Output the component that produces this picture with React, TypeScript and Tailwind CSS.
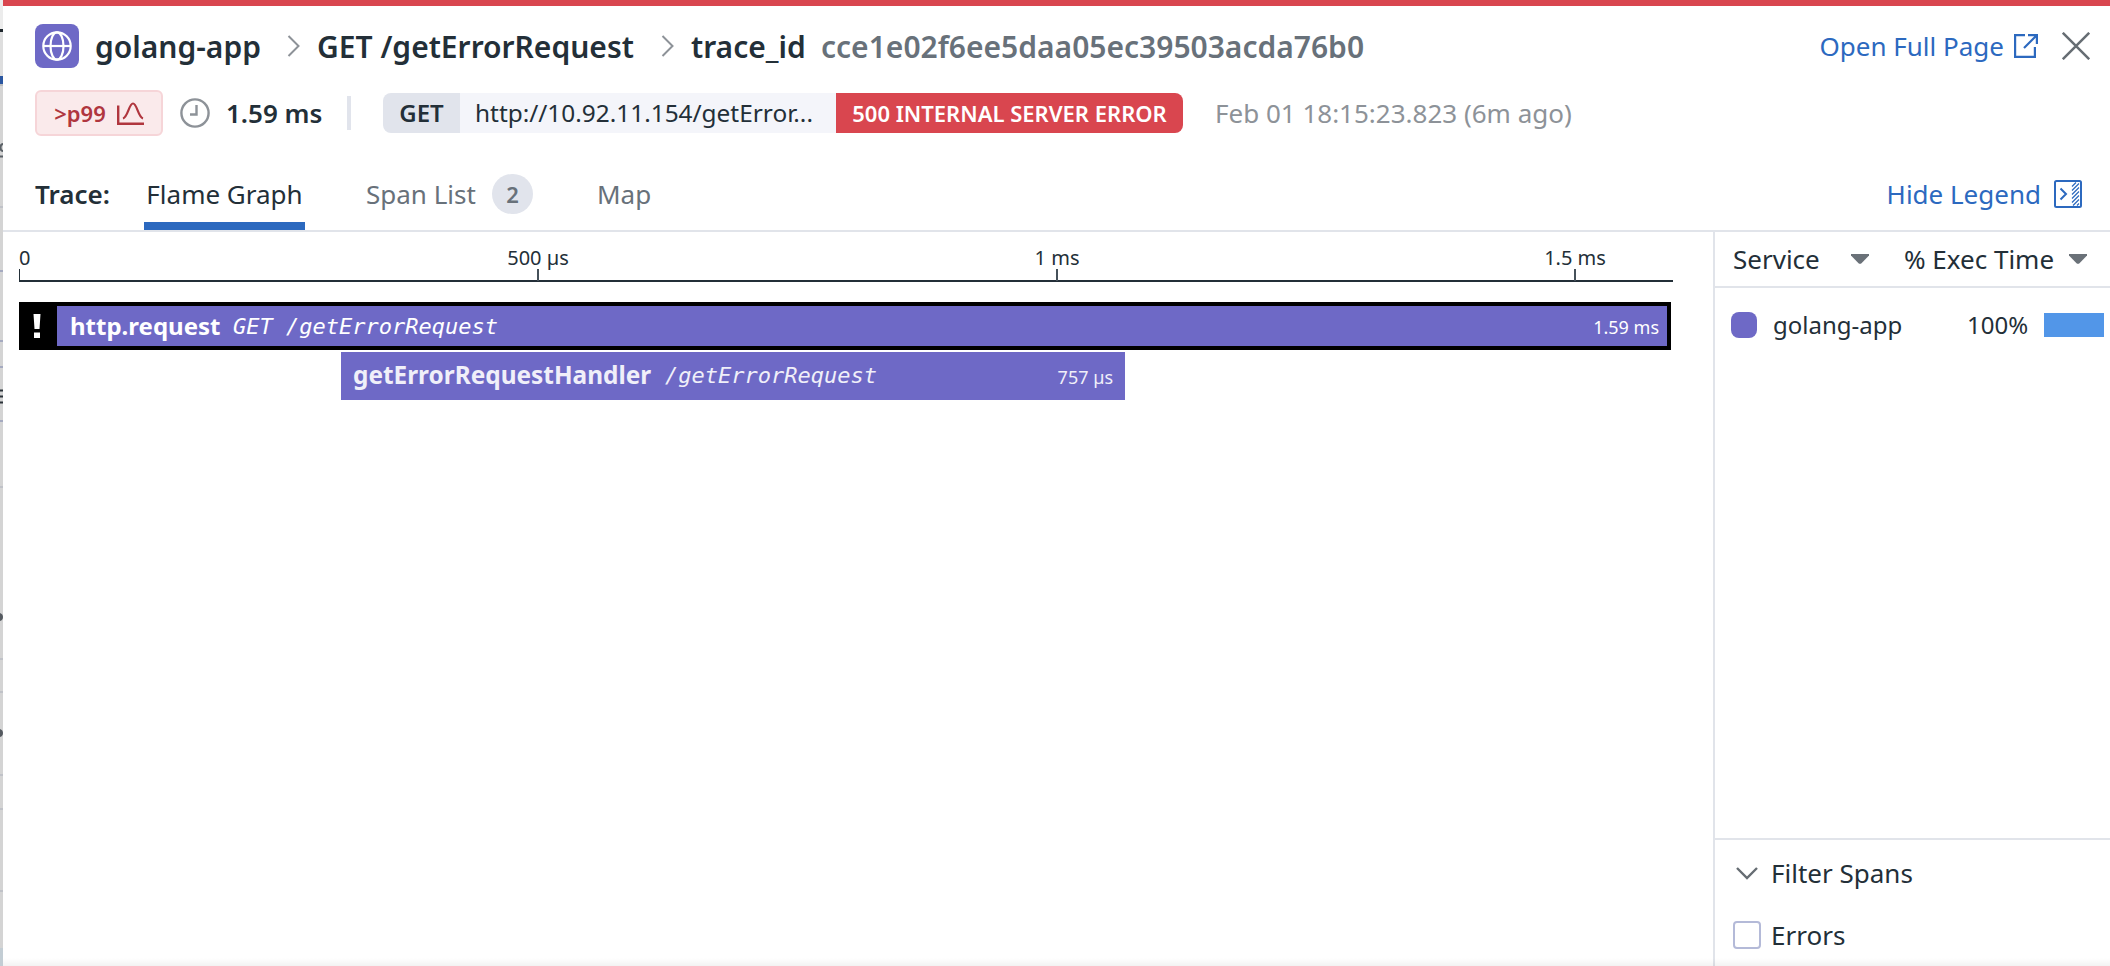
import React from "react";

const axis = [
  { label: "500 µs", left: 518 },
  { label: "1 ms", left: 1037 },
  { label: "1.5 ms", left: 1555 },
];

const edgeLines = [207, 271, 341, 367, 421, 487, 659, 692, 775, 809, 891];

function PageEdge() {
  return (
    <svg className="w-[3px] shrink-0" width="3" height="966" viewBox="0 0 3 966">
      <rect width="3" height="966" fill="#d4d4d4" />
      <rect width="3" height="29" fill="#ececec" />
      <rect y="32" width="3" height="44" fill="#dedede" />
      <rect y="29" width="3" height="3" fill="#1d252b" />
      <rect y="76" width="3" height="8" fill="#2a56a0" />
      <rect y="84" width="3" height="2" fill="#bcbdbf" />
      {edgeLines.map((y) => (
        <rect key={y} y={y - 1} width="3" height="2" fill={y > 250 && y < 430 ? "#a5aac0" : "#c0c2c8"} />
      ))}
      <rect y="948" width="3" height="18" fill="#c3cdd4" />
      <path d="M3 144Q.5 144 .5 147.500T3 151M0 156.500H3" stroke="#5a6066" strokeWidth="2" fill="none" />
      <path d="M0 390.500H3M0 396.500H3M0 402.500H3" stroke="#2a3238" strokeWidth="2" />
      <path d="M0 613q3 1 3 4t-3 4zM0 729q3 1 3 4t-3 4z" fill="#555a60" />
    </svg>
  );
}

function Chevron({ className }: { className?: string }) {
  return (
    <svg className={className} width="14" height="24" viewBox="0 0 14 24" fill="none" stroke="#8d9298" strokeWidth="2">
      <path d="M1.5 2 11.5 12 1.5 22" />
    </svg>
  );
}

function Caret() {
  return (
    <svg width="18" height="10" viewBox="0 0 18 10" fill="#6a7178">
      <path d="M0 0h18v1.500L10.500 9.200q-1.500 1.200-3 0L0 1.500z" />
    </svg>
  );
}

export default function App() {
  return (
    <div className="relative flex h-[966px] w-[2110px] overflow-hidden bg-white font-['Noto_Sans',sans-serif] whitespace-nowrap text-[#232f38]">
      <PageEdge />
      <div className="flex w-[2107px] flex-col border-t-[6px] border-[#d9464f]">
        <header className="flex h-[80px] items-center pl-8">
          <div className="flex h-11 w-11 items-center justify-center rounded-lg bg-[#6e69c6]">
            <svg width="30" height="30" viewBox="0 0 30 30" fill="none" stroke="#fff" strokeWidth="2.200">
              <circle cx="15" cy="15" r="13.700" />
              <ellipse cx="15" cy="15" rx="6.500" ry="13.700" />
              <path d="M1.300 15h27.400" />
            </svg>
          </div>
          <span className="ml-4 w-[166px] text-[30px] font-semibold">golang-app</span>
          <Chevron className="ml-[26px]" />
          <span className="ml-4 w-[317px] text-[30px] font-semibold">GET /getErrorRequest</span>
          <Chevron className="ml-[27px]" />
          <span className="ml-4 w-[115px] text-[30px] font-semibold">trace_id</span>
          <span className="ml-[15px] text-[30px] font-semibold text-[#68717a]">cce1e02f6ee5daa05ec39503acda76b0</span>
          <div className="ml-auto flex items-center pr-5">
            <span className="text-[26px] text-[#2c69bf]">Open Full Page</span>
            <svg className="ml-[10px]" width="24" height="24" viewBox="0 0 24 24" fill="none" stroke="#2c69bf" strokeWidth="2.200">
              <path d="M11 1.100H1.100v21.800h19.800V13M14 1.100h8.900v9M22.500 1.500 10 14" />
            </svg>
            <svg className="ml-6" width="28" height="28" viewBox="0 0 28 28" fill="none" stroke="#666d73" strokeWidth="2.500">
              <path d="M.8.8 27.200 27.200M27.200.8.8 27.200" />
            </svg>
          </div>
        </header>

        <div className="flex h-[54px] items-center pl-8">
          <div className="flex h-[46px] w-32 items-center justify-center gap-[11px] rounded-md border-2 border-[#f6d5d8] bg-[#faeaeb] text-[#b0363e]">
            <span className="text-[22px] font-semibold">&gt;p99</span>
            <svg width="27" height="23" viewBox="0 0 27 23" fill="none" stroke="#b0363e" strokeWidth="2.400">
              <path d="M1.200 3.500v18.200H27" />
              <path d="M6 16.500C11 15 12 1.500 16 1.500s5 13.500 10 15" strokeWidth="2.200" />
            </svg>
          </div>
          <svg className="ml-[17px]" width="30" height="30" viewBox="0 0 30 30" fill="none" stroke="#8d9298" strokeWidth="2.400">
            <circle cx="15" cy="15" r="13.600" />
            <path d="M16.500 7v9.500H10" />
          </svg>
          <span className="ml-4 w-[97px] text-[26px] font-semibold">1.59 ms</span>
          <div className="ml-6 h-[34px] w-1 bg-[#e1e4ec]" />
          <div className="ml-8 flex h-10 items-center overflow-hidden rounded-lg">
            <span className="flex h-10 w-[77px] items-center justify-center bg-[#e1e4ec] text-[24px] font-semibold">GET</span>
            <span className="flex h-10 w-[376px] items-center bg-[#f4f5fa] pl-[15px] text-[24.400px]">http://10.92.11.154/getError...</span>
            <span className="flex h-10 w-[347px] items-center justify-center bg-[#d9464f] text-[22px] font-semibold text-white">500 INTERNAL SERVER ERROR</span>
          </div>
          <span className="ml-8 text-[26px] text-[#8d9298]">Feb 01 18:15:23.823 (6m ago)</span>
        </div>

        <nav className="flex h-[92px] border-b-2 border-[#e1e4ea] pl-8 text-[26px]">
          <div className="flex w-[109px] items-center pt-[18px] font-semibold">Trace:</div>
          <div className="flex w-[161px] items-center justify-center border-b-8 border-[#2c69bf] pt-[26px]">Flame Graph</div>
          <div className="ml-[61px] flex items-center pt-[18px] text-[#68717a]">
            <span className="w-[111px]">Span List</span>
            <span className="ml-[15px] flex h-10 w-[41px] items-center justify-center rounded-full bg-[#e1e4ec] text-[22px] font-semibold">2</span>
            <span className="ml-16">Map</span>
          </div>
          <div className="ml-auto flex items-center gap-[13px] pt-[18px] pr-7 text-[#2c69bf]">
            <span>Hide Legend</span>
            <svg width="28" height="28" viewBox="0 0 28 28" fill="none" stroke="#2c69bf" strokeWidth="2">
              <rect x="1" y="1" width="26" height="26" rx="1.500" />
              <path d="M6.500 8.500 12 14l-5.500 5.500" />
              <path d="M18 6.500 22 2.500M18 10.500l7-7M18 14.500l7-7M18 18.500l7-7M18 22.500l7-7M19 25.500l6-6M23 25.500l2-2" strokeWidth="1.200" />
            </svg>
          </div>
        </nav>

        <main className="flex min-h-0 flex-1">
          <section className="w-[1710px] pl-4">
            <div className="relative h-[50px] w-[1654px] border-b-2 border-[#232f38] text-[20px] leading-none">
              <span className="absolute top-[16px] left-0">0</span>
              <i className="absolute top-[37px] left-0 h-3 w-px bg-[#232f38]" />
              {axis.map((t) => (
                <div key={t.label} className="absolute top-[16px] flex w-0 flex-col items-center" style={{ left: t.left + 1 }}>
                  <span>{t.label}</span>
                  <i className="mt-px h-3 w-0.5 shrink-0 bg-[#46515a]" />
                </div>
              ))}
            </div>
            <div className="mt-5 flex h-12 w-[1652px] items-center border-4 border-black bg-[#6e69c6] text-[24px] text-white">
              <span className="flex h-10 w-[34px] items-center bg-black pl-[10px]">
                <svg width="8" height="24" viewBox="0 0 8 24" fill="#fff">
                  <path d="M.5 0h7L6.500 15h-5zM1 18.500h6V24H1z" />
                </svg>
              </span>
              <span className="ml-[13px] w-[150px] pb-px font-bold">http.request</span>
              <span className="ml-[13px] flex-1 font-['DejaVu_Sans_Mono',monospace] text-[22px] italic">GET /getErrorRequest</span>
              <span className="pt-[3px] pr-2 text-[18px]">1.59 ms</span>
            </div>
            <div className="mt-0.5 ml-[322px] flex h-12 w-[784px] items-center bg-[#6e69c6] pl-3 text-[24.400px] text-[#f0eff9]">
              <span className="w-[300px] pb-0.5 font-bold">getErrorRequestHandler</span>
              <span className="ml-3 flex-1 pb-px font-['DejaVu_Sans_Mono',monospace] text-[22px] italic">/getErrorRequest</span>
              <span className="pt-0.5 pr-3 text-[18px]">757 µs</span>
            </div>
          </section>

          <aside className="flex w-[397px] flex-col border-l-2 border-[#e1e4ea] text-[26px]">
            <div className="flex h-14 items-center border-b-2 border-[#e1e4ea] pl-[18px]">
              <span className="w-[88px]">Service</span>
              <span className="ml-[30px] flex"><Caret /></span>
              <span className="ml-[35px] w-[151px]">% Exec Time</span>
              <span className="ml-[14px] flex"><Caret /></span>
            </div>
            <div className="flex h-[73px] items-center pl-4 text-[24px]">
              <i className="h-[26px] w-[26px] rounded-lg bg-[#6e69c6]" />
              <span className="ml-4 w-[130px]">golang-app</span>
              <span className="ml-[64px] w-[61px]">100%</span>
              <i className="ml-4 h-6 w-[60px] bg-[#5296e8]" />
            </div>
            <div className="mt-auto h-[128px] border-t-2 border-[#e1e4ea] pl-[18px]">
              <div className="flex h-[66px] items-center">
                <svg className="ml-[3px]" width="22" height="13" viewBox="0 0 22 13" fill="none" stroke="#666d73" strokeWidth="2.400">
                  <path d="m1 1 10 10L21 1" />
                </svg>
                <span className="ml-[13px]">Filter Spans</span>
              </div>
              <div className="flex h-[58px] items-center">
                <i className="h-7 w-7 rounded border-2 border-[#b4bad8]" />
                <span className="ml-[10px]">Errors</span>
              </div>
            </div>
          </aside>
        </main>
      </div>
      <div className="absolute bottom-0 left-[3px] h-2 w-[2107px] bg-linear-to-b from-transparent to-black/5" />
    </div>
  );
}
